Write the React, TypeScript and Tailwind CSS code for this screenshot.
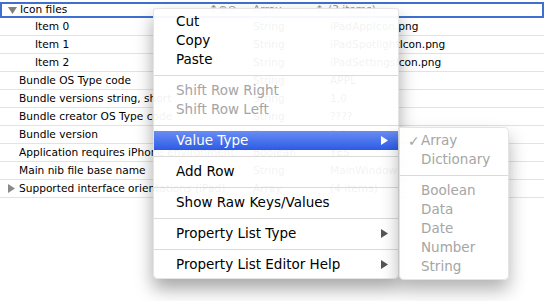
import React from 'react';

type Row = {
  key: string;
  indent?: boolean;
  disclosure?: 'open' | 'closed';
  type: string;
  value: string;
};

const rows: Row[] = [
  { key: 'Item 0', indent: true, type: 'String', value: 'iPadAppIcon.png' },
  { key: 'Item 1', indent: true, type: 'String', value: 'iPadSpotlightIcon.png' },
  { key: 'Item 2', indent: true, type: 'String', value: 'iPadSettingsIcon.png' },
  { key: 'Bundle OS Type code', type: 'String', value: 'APPL' },
  { key: 'Bundle versions string, short', type: 'String', value: '1.0' },
  { key: 'Bundle creator OS Type code', type: 'String', value: '????' },
  { key: 'Bundle version', type: 'String', value: '1.0' },
  { key: 'Application requires iPhone environment', type: 'Boolean', value: 'YES' },
  { key: 'Main nib file base name', type: 'String', value: 'MainWindow' },
  { key: 'Supported interface orientations (iPad)', disclosure: 'closed', type: 'Array', value: '(4 items)' },
];

const Triangle: React.FC<{ dir: 'down' | 'right'; className?: string }> = ({ dir, className }) =>
  dir === 'down' ? (
    <svg width="9" height="7" viewBox="0 0 9 7" className={className}>
      <polygon points="0,0 9,0 4.5,7" fill="currentColor" />
    </svg>
  ) : (
    <svg width="7" height="9" viewBox="0 0 7 9" className={className}>
      <polygon points="0,0 7,4.5 0,9" fill="currentColor" />
    </svg>
  );

const MenuItem: React.FC<{
  label: string;
  disabled?: boolean;
  active?: boolean;
  submenu?: boolean;
}> = ({ label, disabled, active, submenu }) => (
  <div
    className={`h-[19px] flex items-center pl-[22px] pr-[10px] ${
      active ? 'bg-gradient-to-b from-[#6a8cf2] to-[#2c5ae6] text-white' : disabled ? 'text-[#a5a5a5]' : 'text-black'
    }`}
  >
    <span className="flex-1 leading-none">{label}</span>
    {submenu && <Triangle dir="right" className={active ? 'text-white' : 'text-[#555]'} />}
  </div>
);

const Separator: React.FC = () => (
  <div className="h-[12px] flex items-center">
    <div className="h-px w-full bg-[#dadada]" />
  </div>
);

const SubItem: React.FC<{ label: string; checked?: boolean }> = ({ label, checked }) => (
  <div className="h-[19px] flex items-center text-[#a5a5a5]">
    <span className="w-[21px] pl-[8px] text-[14px] leading-none">{checked ? '✓' : ''}</span>
    <span className="leading-none">{label}</span>
  </div>
);

export default function App() {
  return (
    <div className="relative w-[544px] h-[301px] overflow-hidden bg-white text-black font-['DejaVu_Sans',sans-serif]">
      {/* property list table */}
      <div className="text-[10.6px]">
        <div className="mt-[2px] h-[16px] border-2 border-[#3f6fd3] flex items-center">
          <div className="w-[243px] flex items-center overflow-hidden whitespace-nowrap">
            <Triangle dir="down" className="ml-[6px] mr-[3px] text-[#808080]" />
            <span>Icon files</span>
          </div>
          <div className="w-[83px] flex items-center text-[#9a9a9a] whitespace-nowrap">
            <span className="ml-[-36px] w-[36px] text-[11px]">↕⊕⊖</span>
            <span className="ml-[8px]">Array</span>
            <span className="ml-auto mr-[4px]">↕</span>
          </div>
          <span className="text-[#9a9a9a]">(3 items)</span>
        </div>
        {rows.map((r) => (
          <div key={r.key} className="h-[18px] border-b border-[#e3e3e3] flex items-center whitespace-nowrap">
            <div className="w-[245px] flex items-center overflow-hidden">
              {r.disclosure ? (
                <Triangle dir="right" className="ml-[8px] mr-[4px] text-[#8a8a8a]" />
              ) : (
                <span className={r.indent ? 'w-[35px] shrink-0' : 'w-[19px] shrink-0'} />
              )}
              <span>{r.key}</span>
            </div>
            <div className="w-[85px] pl-[8px]">{r.type}</div>
            <div>{r.value}</div>
          </div>
        ))}
      </div>

      {/* context menu */}
      <div className="absolute left-[153px] top-[8px] w-[246px] pt-[3px] pb-[4px] bg-white/95 rounded-t-[3px] rounded-b-[5px] border border-[#d2d2d2]/60 shadow-[0_10px_18px_rgba(0,0,0,0.35)] text-[13.5px]">
        <MenuItem label="Cut" />
        <MenuItem label="Copy" />
        <MenuItem label="Paste" />
        <Separator />
        <MenuItem label="Shift Row Right" disabled />
        <MenuItem label="Shift Row Left" disabled />
        <Separator />
        <MenuItem label="Value Type" active submenu />
        <Separator />
        <MenuItem label="Add Row" />
        <Separator />
        <MenuItem label="Show Raw Keys/Values" />
        <Separator />
        <MenuItem label="Property List Type" submenu />
        <Separator />
        <MenuItem label="Property List Editor Help" submenu />
      </div>

      {/* value type submenu */}
      <div className="absolute left-[399px] top-[127px] w-[110px] pt-[3px] pb-[3px] bg-white/95 rounded-[5px] rounded-tl-none border border-[#d2d2d2]/60 shadow-[0_10px_18px_rgba(0,0,0,0.3)] text-[13.5px]">
        <SubItem label="Array" checked />
        <SubItem label="Dictionary" />
        <Separator />
        <SubItem label="Boolean" />
        <SubItem label="Data" />
        <SubItem label="Date" />
        <SubItem label="Number" />
        <SubItem label="String" />
      </div>
    </div>
  );
}
